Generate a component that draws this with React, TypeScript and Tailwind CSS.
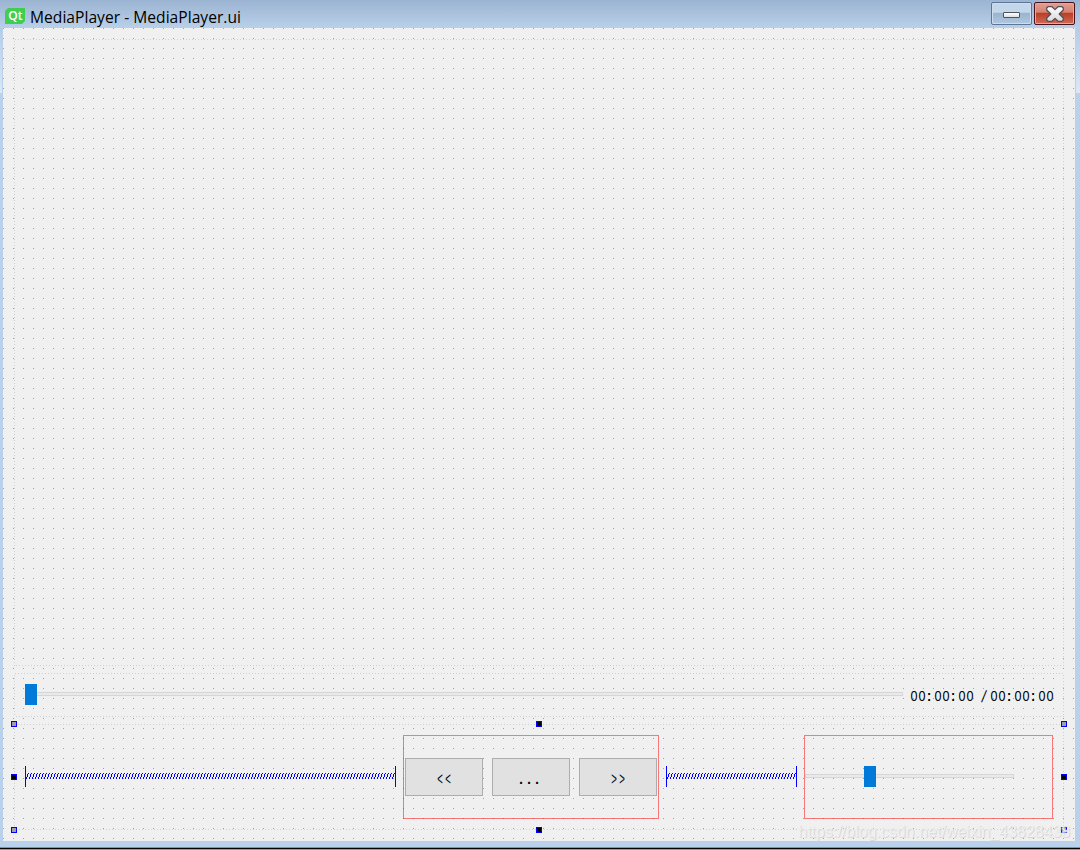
import React from 'react';

const HANDLES = [
  { pos: 'left-[-3px] top-[-3px]', fill: 'bg-[#a0a0a4]' },
  { pos: 'left-[522px] top-[-3px]', fill: 'bg-black' },
  { pos: 'right-[-3px] top-[-3px]', fill: 'bg-[#a0a0a4]' },
  { pos: 'left-[-3px] top-[50px]', fill: 'bg-black' },
  { pos: 'right-[-3px] top-[50px]', fill: 'bg-black' },
  { pos: 'left-[-3px] bottom-[-3px]', fill: 'bg-[#a0a0a4]' },
  { pos: 'left-[522px] bottom-[-3px]', fill: 'bg-black' },
  { pos: 'right-[-3px] bottom-[-3px]', fill: 'bg-[#a0a0a4]' },
];

// Fixed 8px cells, like the bitmap font of the form
function CellText({ text, className = '' }: { text: string; className?: string }) {
  return (
    <span className="flex whitespace-pre">
      {text.split('').map((ch, i) => (
        <span
          key={i}
          className={`flex w-2 justify-center ${ch === ':' ? '-translate-x-px font-bold' : ''} ${ch === '/' ? '-translate-x-0.5 scale-y-115 -skew-x-12' : className}`}
        >
          {ch}
        </span>
      ))}
    </span>
  );
}

function Frame({ className, children }: { className: string; children?: React.ReactNode }) {
  return (
    <div className={`relative ${className}`}>
      {/* dotted layout outline */}
      <div className="absolute inset-x-0 top-0 h-px bg-[repeating-linear-gradient(90deg,transparent_0_1px,#cfcfcf_1px_2px,transparent_2px_3px)]" />
      <div className="absolute inset-x-0 bottom-0 h-px bg-[repeating-linear-gradient(90deg,transparent_0_2px,#cfcfcf_2px_3px)]" />
      <div className="absolute inset-y-0 left-0 w-px bg-[repeating-linear-gradient(180deg,transparent_0_2px,#cfcfcf_2px_3px)]" />
      <div className="absolute inset-y-0 right-0 w-px bg-[repeating-linear-gradient(180deg,transparent_0_2px,#cfcfcf_2px_3px)]" />
      {children}
    </div>
  );
}

function Spring({ id, className }: { id: string; className: string }) {
  return (
    <div className={`mb-px flex h-[21px] items-start border-x border-[#0000ff] pt-[7px] ${className}`}>
      <svg className="h-1.5 w-full" shapeRendering="crispEdges">
        <defs>
          <pattern id={id} width="3" height="6" patternUnits="userSpaceOnUse">
            <rect x="2" y="0" width="1" height="1" fill="#0000ff" />
            <rect x="1" y="1" width="1" height="3" fill="#0000ff" />
            <rect x="0" y="4" width="1" height="2" fill="#0000ff" />
          </pattern>
        </defs>
        <rect width="100%" height="6" fill={`url(#${id})`} />
      </svg>
    </div>
  );
}

function Slider({ width, offset }: { width: string; offset: string }) {
  return (
    <div className={`relative flex h-[21px] items-start pt-2 ${width}`}>
      <div className="h-1 w-full border border-[#d6d6d6] bg-[#e7eaea]" />
      <div className={`absolute top-0 h-[21px] w-3 bg-[#007ad9] ${offset}`} />
    </div>
  );
}

function PushButton({ children }: { children: React.ReactNode }) {
  return (
    <button className="flex h-[38px] w-[78px] items-center justify-center border border-[#adadad] bg-[#e1e1e1] pr-px pt-[3px] font-['Liberation_Sans'] text-base leading-none text-black">
      {children}
    </button>
  );
}

function TitleBar() {
  return (
    <div className="flex h-7 items-start bg-linear-to-b from-[#9bb4d1] to-[#b9d0ea] pl-[5px]">
      <svg className="mt-2 h-4 w-5" viewBox="0 0 20 16">
        <path d="M3 0H20V13L17 16H0V3Z" fill="#41cd52" />
        <text x="3.2" y="12" fontFamily="Open Sans, sans-serif" fontWeight="600" fontSize="12" fill="#fff">
          Qt
        </text>
      </svg>
      <div className="ml-[5px] mt-[5px] grow whitespace-nowrap font-['Open_Sans',sans-serif] text-[15.6px] leading-6 tracking-[0.02px] text-black">
        MediaPlayer - MediaPlayer.ui
      </div>
      <div className="mr-[5px] mt-0.5 flex gap-0.5">
        <button className="flex h-[23px] w-[41px] items-center justify-center rounded-[2px] border border-[#5d7596] bg-[linear-gradient(#c4d6ea_0_45%,#98b3cf_46%,#afc8e0)] pt-[3px] shadow-[inset_0_0_0_1px_#ccddf0]">
          <span className="h-1.5 w-[17px] rounded-[1px] border border-[#4d535e] bg-linear-to-b from-white to-[#ddd]" />
        </button>
        <button className="flex h-[23px] w-[41px] items-center justify-center rounded-[2px] border border-[#4c101a] bg-[linear-gradient(#e0a093_0%,#d6806f_45%,#b93a22_46%,#ce6c55)] shadow-[inset_0_0_0_1px_#e6a79c]">
          <svg className="h-4 w-[18px]" viewBox="0 0 18 16">
            <defs>
              <linearGradient id="cross" x1="0" y1="0" x2="0" y2="1">
                <stop offset="0" stopColor="#fff" />
                <stop offset="1" stopColor="#d8d8d8" />
              </linearGradient>
            </defs>
            <path
              d="M2 0.7H6L9 3.6L12 0.7H16L17.3 2V4L13.2 8L17.3 12V14L16 15.3H12L9 12.4L6 15.3H2L0.7 14V12L4.8 8L0.7 4V2Z"
              fill="url(#cross)"
              stroke="#50505c"
              strokeWidth="1.3"
              strokeLinejoin="round"
            />
          </svg>
        </button>
      </div>
    </div>
  );
}

export default function App() {
  return (
    <div className="relative flex h-[850px] w-[1080px] flex-col overflow-hidden bg-[#b9d1ea]">
      <TitleBar />

      <div className="flex h-[813px]">
        <div className="h-[65px] w-[3px] border-r border-[#b9d1ea] bg-linear-to-b from-[#b4cce8] to-[#dbe8f6]" />
        <div className="flex w-[1072px] flex-col bg-[#f0f0f0] bg-[conic-gradient(from_270deg_at_1px_1px,#a0a0a0_90deg,transparent_0)] bg-[size:10px_10px] px-[11px] pt-[11px]">
          <Frame className="h-[627px]" />

          <Frame className="mt-[7px] flex h-11 items-start pl-[11px] pt-[11px]">
            <Slider width="w-[878px]" offset="left-0" />
            <div className="ml-1.5 mt-[5px] pl-[0.5px] font-['Liberation_Sans'] text-sm leading-[14px] text-black">
              <CellText text="00:00:00 /00:00:00" className="scale-x-90" />
            </div>
          </Frame>

          <Frame className="mt-[7px] flex h-[106px] items-center pl-[11px]">
            <Spring id="springLeft" className="w-[371px]" />
            <div className="ml-[7px] flex h-[84px] w-64 items-center justify-center gap-[9px] border border-[#ff0000]/50">
              <PushButton>
                <CellText text="<<" className="scale-x-60 scale-y-115 font-light" />
              </PushButton>
              <PushButton>
                <span className="mb-0.5 mr-1">
                  <CellText text="..." className="scale-125" />
                </span>
              </PushButton>
              <PushButton>
                <CellText text=">>" className="scale-x-60 scale-y-115 font-light" />
              </PushButton>
            </div>
            <Spring id="springRight" className="ml-[7px] w-[131px]" />
            <div className="ml-[7px] flex h-[84px] w-[249px] items-start border border-[#ff0000]/50 pt-[30px]">
              <Slider width="w-[209px]" offset="left-[59px]" />
            </div>
            {HANDLES.map((h, i) => (
              <span key={i} className={`absolute size-1.5 border border-[#0000ff] ${h.pos} ${h.fill}`} />
            ))}
          </Frame>
        </div>
        <div className="ml-px h-[65px] w-1 bg-linear-to-b from-[#b4cce8] to-[#dbe8f6]" />
      </div>

      <div className="h-1.5" />
      <div className="h-px bg-[#2fb4d8]" />
      <div className="h-px bg-black" />
      <div className="h-px bg-[#8f9a9a]" />

      <div className="absolute left-[798px] top-[822px] whitespace-nowrap font-['Liberation_Sans'] text-[16px] leading-5 text-[#f3f3f3]/85 [text-shadow:1px_1px_1px_#d2d2d2]">
        https://blog.csdn.net/weixin_43828438
      </div>
    </div>
  );
}
